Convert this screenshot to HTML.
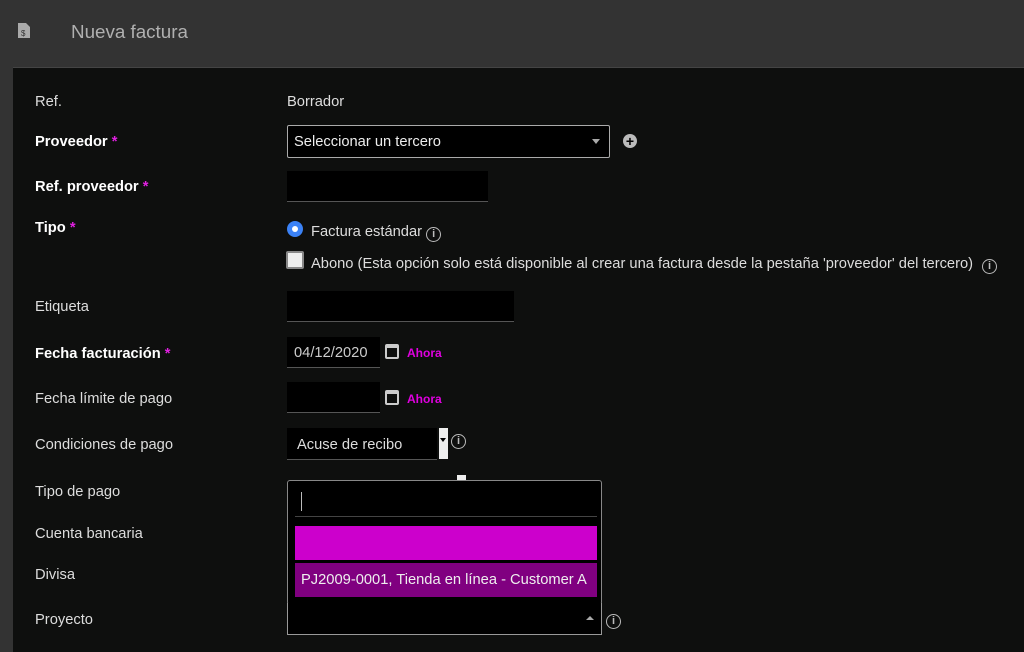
<!DOCTYPE html>
<html><head><meta charset="utf-8"><style>
body{margin:0;width:1024px;height:651px;background:#333;font-family:"Liberation Sans",sans-serif;overflow:hidden;position:relative;color:#ddd;font-size:14.7px}
.a{position:absolute}
.panel{left:13px;top:67px;width:1011px;height:584px;background:#0e0f0e;border-top:1px solid #444}
.lbl{left:35px;color:#ddd}
.b{font-weight:bold;color:#fff}
.star{color:#e020e0}
.in{background:#000;border-bottom:1px solid #555}
.info{display:inline-block;width:13px;height:13px;border:1.5px solid #bbb;border-radius:50%;font-size:11px;line-height:13px;text-align:center;color:#bbb;font-weight:bold;box-sizing:content-box;vertical-align:-1px}
.ahora{color:#e000e0;font-size:12px;font-weight:bold}
.cal{width:14px;height:15px;border:2px solid #ccc;border-top-width:4px;border-radius:2px;box-sizing:border-box}
</style></head><body>
<svg class="a" style="left:18px;top:23px" width="12" height="15" viewBox="0 0 12 15"><path d="M0 0h8l4 4v11H0z" fill="#aaa"/><text x="3" y="13" font-size="8" fill="#333" font-family="Liberation Sans">$</text></svg>
<div class="a" style="left:71px;top:21px;font-size:18.8px;color:#b0b0b0">Nueva factura</div>
<div class="a panel"></div>

<div class="a lbl" style="top:94px">Ref.</div>
<div class="a" style="left:287px;top:94px">Borrador</div>

<div class="a lbl b" style="top:134px">Proveedor <span class="star">*</span></div>
<div class="a" style="left:287px;top:125px;width:321px;height:31px;background:#000;border:1px solid #aaa;border-radius:2px"></div>
<div class="a" style="left:294px;top:134px;color:#eee">Seleccionar un tercero</div>
<div class="a" style="left:592px;top:139px;width:0;height:0;border:4px solid transparent;border-top:5px solid #aaa"></div>
<div class="a" style="left:623px;top:134px;width:14px;height:14px;border-radius:50%;background:#bbb;color:#000;font-size:14px;line-height:14px;text-align:center;font-weight:bold">+</div>

<div class="a lbl b" style="top:179px">Ref. proveedor <span class="star">*</span></div>
<div class="a in" style="left:287px;top:171px;width:201px;height:30px"></div>

<div class="a lbl b" style="top:220px">Tipo <span class="star">*</span></div>
<div class="a" style="left:287px;top:221px;width:16px;height:16px;border-radius:50%;background:#3b82f6;box-sizing:border-box;border:4px solid #3b82f6"><div style="width:6px;height:6px;background:#fff;border-radius:50%;margin:1px"></div></div>
<div class="a" style="left:311px;top:224px">Factura estándar <span class="info">i</span></div>
<div class="a" style="left:286px;top:251px;width:18px;height:18px;background:#eee;border:2px solid #888;box-sizing:border-box;border-radius:2px"></div>
<div class="a" style="left:311px;top:256px">Abono (Esta opción solo está disponible al crear una factura desde la pestaña 'proveedor' del tercero)</div>
<div class="a" style="left:982px;top:256px"><span class="info">i</span></div>

<div class="a lbl" style="top:299px">Etiqueta</div>
<div class="a in" style="left:287px;top:291px;width:227px;height:30px"></div>

<div class="a lbl b" style="top:346px">Fecha facturación <span class="star">*</span></div>
<div class="a in" style="left:287px;top:337px;width:93px;height:30px"></div>
<div class="a" style="left:294px;top:345px;color:#ccc">04/12/2020</div>
<div class="a cal" style="left:385px;top:344px"></div>
<div class="a ahora" style="left:407px;top:346px">Ahora</div>

<div class="a lbl" style="top:391px">Fecha límite de pago</div>
<div class="a in" style="left:287px;top:382px;width:93px;height:30px"></div>
<div class="a cal" style="left:385px;top:390px"></div>
<div class="a ahora" style="left:407px;top:392px">Ahora</div>

<div class="a lbl" style="top:437px">Condiciones de pago</div>
<div class="a in" style="left:287px;top:428px;width:150px;height:31px"></div>
<div class="a" style="left:297px;top:437px;color:#ddd">Acuse de recibo</div>
<div class="a" style="left:439px;top:428px;width:9px;height:31px;background:#eee"></div>
<div class="a" style="left:440px;top:438px;border:3px solid transparent;border-top:4px solid #000"></div>
<div class="a" style="left:451px;top:431px"><span class="info">i</span></div>

<div class="a lbl" style="top:484px">Tipo de pago</div>
<div class="a" style="left:457px;top:475px;width:9px;height:8px;background:#eee"></div>
<div class="a lbl" style="top:526px">Cuenta bancaria</div>
<div class="a lbl" style="top:567px">Divisa</div>
<div class="a lbl" style="top:612px">Proyecto</div>

<div class="a" style="left:287px;top:480px;width:315px;height:125px;background:#000;border:1px solid #888;border-radius:3px;box-sizing:border-box"></div>
<div class="a" style="left:301px;top:492px;width:1px;height:19px;background:#bbb"></div>
<div class="a" style="left:295px;top:516px;width:302px;height:1px;background:#444"></div>
<div class="a" style="left:295px;top:526px;width:302px;height:34px;background:#cc00cc"></div>
<div class="a" style="left:295px;top:563px;width:302px;height:34px;background:#800080"></div>
<div class="a" style="left:301px;top:572px;color:#eee">PJ2009-0001, Tienda en línea - Customer A</div>
<div class="a" style="left:287px;top:603px;width:315px;height:32px;background:#000;border:1px solid #999;border-top:none;box-sizing:border-box"></div>
<div class="a" style="left:586px;top:616px;border:4px solid transparent;border-bottom:4px solid #aaa;border-top:none"></div>
<div class="a" style="left:606px;top:611px"><span class="info">i</span></div>
</body></html>
